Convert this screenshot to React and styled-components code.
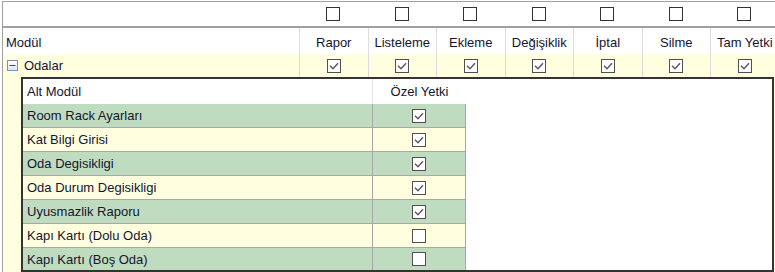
import React from "react";
import styled, { createGlobalStyle } from "styled-components";

const Global = createGlobalStyle`
  html, body { margin: 0; padding: 0; background: #fff; overflow: hidden; }
  body { font-family: "Liberation Sans", Arial, sans-serif; font-size: 13px; color: #141430; }
`;

const COLS = "296px repeat(7, 68.5px)";

const Frame = styled.div`
  margin: 1px 0 0 2px;
  width: 800px;
  border-left: 1px solid #a0a0a0;
  border-top: 1px solid #a0a0a0;
`;

const Row = styled.div`
  display: grid;
  grid-template-columns: ${COLS};
  height: ${(p) => p.$h}px;
  background: ${(p) => p.$bg || "#fff"};
  border-bottom: ${(p) => (p.$line ? "2px solid #a0a0a0" : "none")};
`;

const Cell = styled.div`
  display: flex;
  align-items: ${(p) => (p.$top ? "flex-start" : "center")};
  justify-content: ${(p) => (p.$left ? "flex-start" : "center")};
  padding: ${(p) => (p.$top ? "8px 0 0" : "0")};
  padding-left: ${(p) => p.$pl || 0}px;
  border-left: ${(p) => (p.$sep ? "1px solid #dcdcdc" : "none")};
  white-space: nowrap;
  overflow: hidden;
  line-height: 14px;
`;

const Name = styled.span`
  margin-left: 6px;
`;

const Detail = styled.div`
  background: #ffffe0;
  padding-left: 18px;
`;

const Nested = styled.div`
  width: 749px;
  border: 2px solid #333;
  background: #fff;
`;

const NRow = styled.div`
  display: grid;
  grid-template-columns: 349px 94px 1fr;
  height: ${(p) => p.$h}px;
`;

const NCell = styled.div`
  display: flex;
  align-items: center;
  justify-content: ${(p) => (p.$center ? "center" : "flex-start")};
  padding-left: ${(p) => (p.$center ? 0 : 4)}px;
  background: ${(p) => p.$bg || "transparent"};
  border-bottom: ${(p) => (p.$bb ? "1px solid #a8a8a8" : "none")};
  border-left: ${(p) => p.$bl || "none"};
  border-right: ${(p) => p.$br || "none"};
  white-space: nowrap;
`;

const Box = ({ checked, dark }) => (
  <svg width="14" height="14" viewBox="0 0 14 14" style={{ display: "block" }}>
    <rect x="0.5" y="0.5" width="13" height="13" fill="#fff" stroke={dark ? "#333" : "#505050"} />
    {checked && (
      <polyline points="3,6.8 6,9.7 11,4.3" fill="none" stroke="#5a5a5a" strokeWidth="1.5" />
    )}
  </svg>
);

const Minus = () => (
  <svg width="11" height="11" viewBox="0 0 11 11" style={{ display: "block" }}>
    <defs>
      <linearGradient id="mg" x1="0" y1="0" x2="0" y2="1">
        <stop offset="0" stopColor="#ffffff" />
        <stop offset="1" stopColor="#dde3ee" />
      </linearGradient>
    </defs>
    <rect x="0.5" y="0.5" width="10" height="10" fill="url(#mg)" stroke="#8090b0" />
    <line x1="2.5" y1="5.5" x2="8.5" y2="5.5" stroke="#2a4a9a" strokeWidth="1" />
  </svg>
);

const perms = ["Rapor", "Listeleme", "Ekleme", "Değişiklik", "İptal", "Silme", "Tam Yetki"];
const subs = [
  ["Room Rack Ayarları", true],
  ["Kat Bilgi Girisi", true],
  ["Oda Degisikligi", true],
  ["Oda Durum Degisikligi", true],
  ["Uyusmazlik Raporu", true],
  ["Kapı Kartı (Dolu Oda)", false],
  ["Kapı Kartı (Boş Oda)", false],
];

export default function App() {
  return (
    <>
      <Global />
      <Frame>
        <Row $h={24} $line>
          <Cell />
          {perms.map((p) => (
            <Cell key={p}>
              <Box dark />
            </Cell>
          ))}
        </Row>
        <Row $h={26}>
          <Cell $left $top $pl={3}>Modül</Cell>
          {perms.map((p) => (
            <Cell key={p} $top $sep>
              {p}
            </Cell>
          ))}
        </Row>
        <Row $h={23} $bg="#ffffe0">
          <Cell $left $pl={4}>
            <Minus />
            <Name>Odalar</Name>
          </Cell>
          {perms.map((p) => (
            <Cell key={p} $sep>
              <Box checked />
            </Cell>
          ))}
        </Row>
        <Detail>
          <Nested>
            <NRow $h={25}>
              <NCell>Alt Modül</NCell>
              <NCell $center $bl="1px solid #e6e6e6">Özel Yetki</NCell>
              <NCell />
            </NRow>
            {subs.map(([name, on], i) => {
              const bg = i % 2 === 0 ? "#c0dcc0" : "#ffffe0";
              const last = i === subs.length - 1;
              return (
                <NRow key={name} $h={last ? 22 : 24}>
                  <NCell $bg={bg} $bb={!last}>{name}</NCell>
                  <NCell
                    $center
                    $bg={bg}
                    $bb={!last}
                    $bl="1px solid #a8a8a8"
                    $br="1px solid #a8a8a8"
                  >
                    <Box checked={on} />
                  </NCell>
                  <NCell />
                </NRow>
              );
            })}
          </Nested>
        </Detail>
      </Frame>
    </>
  );
}
